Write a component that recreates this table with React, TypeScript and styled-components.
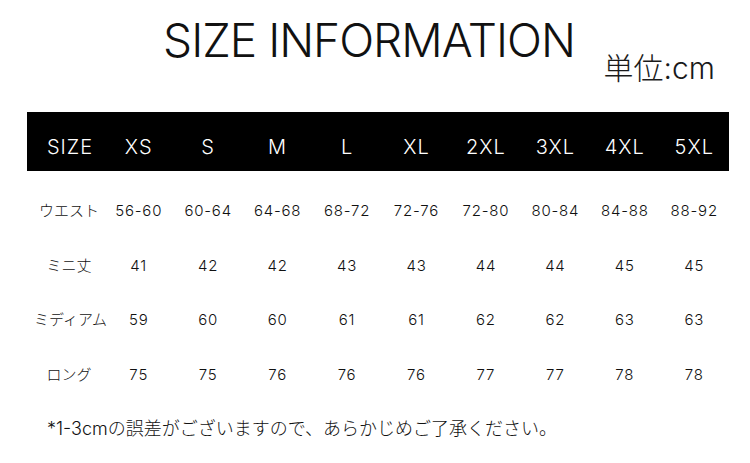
import * as React from "react";
import styled, { createGlobalStyle } from "styled-components";

const sizes = ["XS", "S", "M", "L", "XL", "2XL", "3XL", "4XL", "5XL"];

const rows: { label: string; values: string[] }[] = [
  {
    label: "ウエスト",
    values: ["56-60", "60-64", "64-68", "68-72", "72-76", "72-80", "80-84", "84-88", "88-92"],
  },
  { label: "ミニ丈", values: ["41", "42", "42", "43", "43", "44", "44", "45", "45"] },
  { label: "ミディアム", values: ["59", "60", "60", "61", "61", "62", "62", "63", "63"] },
  { label: "ロング", values: ["75", "75", "76", "76", "76", "77", "77", "78", "78"] },
];

const fontStack = `"Liberation Sans", "Noto Sans CJK JP", sans-serif`;
const thinStack = `Inter, "Noto Sans CJK JP", sans-serif`;

const GlobalStyle = createGlobalStyle`
  html, body {
    margin: 0;
    padding: 0;
    background: #fff;
  }
  body {
    font-family: ${fontStack};
    color: #1a1a1a;
  }
`;

const Page = styled.div`
  width: 750px;
  height: 463px;
  box-sizing: border-box;
  padding: 17px 21px 0 27px;
  display: flex;
  flex-direction: column;
  overflow: hidden;
`;

const Title = styled.h1`
  margin: 0;
  padding-right: 18px;
  text-align: center;
  font-family: ${thinStack};
  font-size: 46px;
  line-height: 46px;
  font-weight: 300;
  letter-spacing: -1px;
  color: #111;
`;

const Unit = styled.div`
  margin-top: -10px;
  padding-right: 14px;
  text-align: right;
  font-family: ${thinStack};
  font-weight: 300;
  font-size: 30px;
  line-height: 30px;
  color: #1a1a1a;
`;

const Grid = styled.div`
  display: grid;
  grid-template-columns: 77px repeat(9, 1fr);
`;

const HeaderBar = styled(Grid)`
  margin-top: 29px;
  height: 59px;
  box-sizing: border-box;
  padding-top: 12px;
  background: #000;
  color: #fff;
  font-family: ${thinStack};
  font-weight: 300;
  font-size: 20px;
  line-height: 47px;
  letter-spacing: 1px;
`;

const Cell = styled.div<{ $first?: boolean }>`
  text-align: center;
  white-space: nowrap;
  padding-left: ${(p) => (p.$first ? "9px" : "0")};
`;

const Body = styled.div`
  margin-top: 13px;
  display: flex;
  flex-direction: column;
`;

const DataRow = styled(Grid)`
  height: 54.7px;
  line-height: 54.7px;
  font-family: ${thinStack};
  font-weight: 300;
  font-size: 15px;
  letter-spacing: 0.8px;
  color: #111;
`;

const Label = styled(Cell)`
  font-size: 15px;
  letter-spacing: 0;
  padding-left: 7px;
`;

const Note = styled.p`
  margin: 14px 0 0;
  padding-left: 20px;
  font-family: ${thinStack};
  font-weight: 300;
  font-size: 18px;
  line-height: 24px;
  color: #111;
`;

export default function App() {
  return (
    <Page>
      <GlobalStyle />
      <Title>SIZE INFORMATION</Title>
      <Unit>単位:cm</Unit>
      <HeaderBar>
        <Cell $first>SIZE</Cell>
        {sizes.map((s) => (
          <Cell key={s}>{s}</Cell>
        ))}
      </HeaderBar>
      <Body>
        {rows.map((r) => (
          <DataRow key={r.label}>
            <Label>{r.label}</Label>
            {r.values.map((v, i) => (
              <Cell key={i}>{v}</Cell>
            ))}
          </DataRow>
        ))}
      </Body>
      <Note>*1-3cmの誤差がございますので、あらかじめご了承ください。</Note>
    </Page>
  );
}
